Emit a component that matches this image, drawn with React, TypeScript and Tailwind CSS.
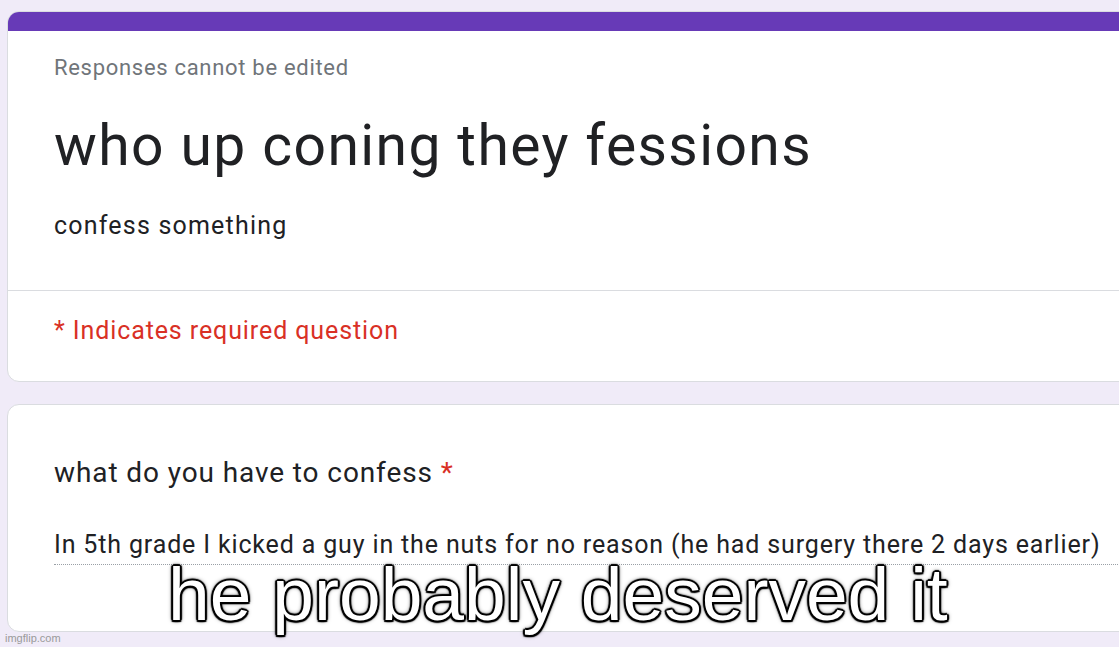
import React from 'react';

const roboto = "font-['Roboto','Noto_Sans',sans-serif]";

const App: React.FC = () => {
  return (
    <div className={`relative h-[647px] w-[1119px] overflow-hidden bg-[#f0ebf8] ${roboto}`}>
      <div className="pl-[7px] pt-[11px]">
        {/* header card */}
        <div className="w-[1140px] overflow-hidden rounded-xl border border-[#dadce0] bg-white">
          <div className="h-[19px] bg-[#673ab7]" />
          <div className="pl-[46px] pt-[23px] pb-[48px]">
            <div className="text-[22px] leading-[28px] tracking-[0.7px] text-[#70757a]">Responses cannot be edited</div>
            <div className="mt-[32px] text-[57px] leading-[64px] tracking-[1.4px] text-[#202124]">who up coning they fessions</div>
            <div className="mt-[32px] text-[25px] leading-[32px] tracking-[1.2px] text-[#202124]">confess something</div>
          </div>
          <div className="h-px bg-[#dadce0]" />
          <div className="pl-[46px] pt-[24px] pb-[34px]">
            <div className="text-[25px] leading-[32px] tracking-[0.9px] text-[#d93025]">* Indicates required question</div>
          </div>
        </div>

        {/* question card */}
        <div className="mt-[22px] w-[1140px] rounded-xl border border-[#dadce0] bg-white pl-[46px] pt-[50px] pb-[66px]">
          <div className="text-[28px] leading-[36px] tracking-[0.9px] text-[#202124]">
            what do you have to confess <span className="text-[#d93025]">*</span>
          </div>
          <div className="mt-[38px] border-b border-dotted border-[#9aa0a6] pb-[3px] text-[25px] leading-[32px] tracking-[0.85px] text-[#202124]">
            In 5th grade I kicked a guy in the nuts for no reason (he had surgery there 2 days earlier)
          </div>
        </div>
      </div>

      {/* meme caption */}
      <div className="absolute left-[168px] top-[549px] whitespace-nowrap font-['Liberation_Sans',Arial,sans-serif] text-[75px] leading-[90px] text-white [text-shadow:2px_0_1px_#000,-2px_0_1px_#000,0_2px_1px_#000,0_-2px_1px_#000,1.5px_1.5px_1px_#000,-1.5px_1.5px_1px_#000,1.5px_-1.5px_1px_#000,-1.5px_-1.5px_1px_#000,0_0_5px_#000]">
        he probably deserved it
      </div>

      <div className="absolute left-[5px] top-[631px] font-['Liberation_Sans',Arial,sans-serif] text-[11px] leading-[14px] text-[#9a9a9a]">
        imgflip.com
      </div>
    </div>
  );
};

export default App;
